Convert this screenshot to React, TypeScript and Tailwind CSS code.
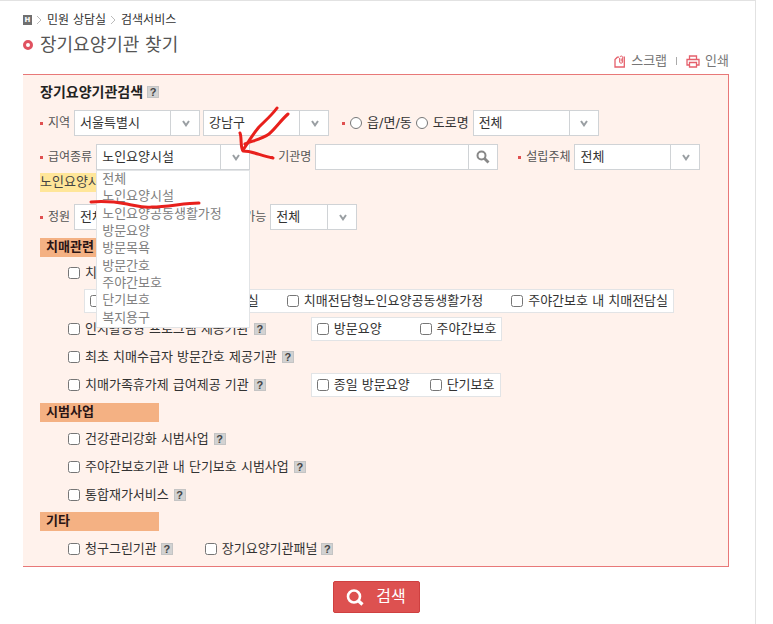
import { useState } from "react";
import type { ReactNode } from "react";

const CARE_TYPES = [
  "전체",
  "노인요양시설",
  "노인요양공동생활가정",
  "방문요양",
  "방문목욕",
  "방문간호",
  "주야간보호",
  "단기보호",
  "복지용구",
];

function Arrow() {
  return (
    <span className="pointer-events-none absolute inset-y-0 right-0 flex w-[30px] items-center justify-center border-l border-[#d0d3d6]">
      <svg width="8" height="7" viewBox="0 0 8 7" fill="none">
        <path d="M1 1L4 5.3L7 1" stroke="#9a9fa3" strokeWidth="2" />
      </svg>
    </span>
  );
}

type SelectProps = {
  label: string;
  options: string[];
  className: string;
};

function Select({ label, options, className }: SelectProps) {
  return (
    <span className={`relative inline-flex h-[26px] ${className}`}>
      <select
        aria-label={label}
        className="w-full appearance-none border border-[#d0d3d6] bg-white pl-[5px] text-[13px] leading-5 text-[#333]"
      >
        {options.map((option) => (
          <option key={option}>{option}</option>
        ))}
      </select>
      <Arrow />
    </span>
  );
}

function CareTypeSelect() {
  const [value, setValue] = useState("노인요양시설");
  const [open, setOpen] = useState(true);

  return (
    <span className="relative inline-flex h-[26px] w-[154px]">
      <button
        type="button"
        aria-label="급여종류"
        aria-haspopup="listbox"
        aria-expanded={open}
        onClick={() => setOpen(!open)}
        className="w-full border border-[#d0d3d6] bg-white pl-[5px] text-left text-[13px] leading-5 text-[#333]"
      >
        {value}
      </button>
      <Arrow />
      {open ? (
        <ul
          role="listbox"
          className="absolute left-0 top-full z-10 grid h-[158px] w-full grid-rows-9 border border-[#e2e4e6] bg-white text-[13px] leading-[15px] text-[#808080]"
        >
          {CARE_TYPES.map((type) => (
            <li
              key={type}
              role="option"
              aria-selected={type === value}
              onClick={() => {
                setValue(type);
                setOpen(false);
              }}
              className="cursor-pointer whitespace-nowrap pl-[5px] hover:bg-gray-100"
            >
              {type}
            </li>
          ))}
        </ul>
      ) : null}
    </span>
  );
}

function FieldLabel({ children }: { children: ReactNode }) {
  return (
    <span className="mr-1 flex items-center gap-[5px] whitespace-nowrap text-xs text-[#555]">
      <i className="size-[3px] bg-[#e05050]" />
      {children}
    </span>
  );
}

function Help() {
  return (
    <button
      type="button"
      aria-label="도움말"
      className="flex size-3 items-center justify-center border border-[#c4c4c4] bg-[#d2d2d2] font-['Liberation_Sans',sans-serif] text-[11px] font-bold leading-none text-[#444]"
    >
      ?
    </button>
  );
}

function Check({ children }: { children: ReactNode }) {
  return (
    <label className="flex items-center gap-[5px] whitespace-nowrap">
      <input type="checkbox" className="size-3" />
      {children}
    </label>
  );
}

function SectionTitle({ children }: { children: ReactNode }) {
  return (
    <h3 className="h-[19px] w-[119px] bg-[#f4b183] pl-[6px] text-[13px] font-bold leading-[18px] text-[#2a1515]">
      {children}
    </h3>
  );
}

function OptionBox({ children, className = "" }: { children: ReactNode; className?: string }) {
  return (
    <div className={`flex h-6 items-center border border-[#e2e4e6] bg-white px-[5px] ${className}`}>
      {children}
    </div>
  );
}

// Pen marks over the form
function PenMarks() {
  return (
    <svg
      className="pointer-events-none absolute left-0 top-0 z-20"
      width="300"
      height="220"
      viewBox="0 0 300 220"
      fill="none"
      stroke="#e8201c"
      strokeWidth="3"
      strokeLinecap="round"
      strokeLinejoin="round"
    >
      <path d="M277 108C272 115 265 121 259 127C253 134 249 141 243 150" />
      <path d="M288 114C281 120 276 128 269 134C262 139 252 141 245 144" />
      <path d="M240 133C242 138 240 146 243 151C253 151 261 156 273 158" />
      <path d="M91 202C104 201 116 202 127 204C138 206 142 208 152 207C167 207 185 203 199 203" />
    </svg>
  );
}

function Crumb() {
  return (
    <svg
      className="ml-1 mr-[5px]"
      width="6"
      height="10"
      viewBox="0 0 6 10"
      fill="none"
      stroke="#bbb"
      strokeWidth="1"
    >
      <path d="M1 1L5 5L1 9" />
    </svg>
  );
}

export default function App() {
  return (
    <div className="relative bg-white pr-[17px] font-['DejaVu_Sans','Noto_Sans_CJK_KR',sans-serif] text-[13px] leading-5 text-[#333]">
      <main className="min-h-screen border-r border-t border-[#e2e2e2] pl-[23px] pr-[26px] pt-[9px]">
        <nav className="flex h-5 items-center text-xs text-[#333]">
          <a
            href="#home"
            aria-label="홈"
            className="flex h-[10px] w-[9px] items-center justify-center bg-[#6f6f6f] text-[7px] font-bold leading-none text-white"
          >
            H
          </a>
          <Crumb />
          <a href="#counsel">민원 상담실</a>
          <Crumb />
          <a href="#search">검색서비스</a>
        </nav>

        <header className="flex h-11 items-start justify-between">
          <h1 className="flex h-[30px] items-center gap-[7px] text-lg text-[#555]">
            <i className="size-[10px] rounded-full border-[3px] border-[#e05260]" />
            장기요양기관 찾기
          </h1>
          <div className="flex items-center self-end pb-[3px] text-[#777]">
            <button type="button" className="flex items-center gap-[5px]">
              <svg width="12" height="13" viewBox="0 0 12 13" fill="none" stroke="#e5606c" strokeWidth="1.3">
                <path d="M5 2.2H3.3L1 4.5V12H10.3V2.2H9.5" />
                <path d="M5.6 3V7C5.6 8.6 8.6 8.6 8.6 7V2.2C8.6 0.6 6 0.6 6 2.2M7.2 3.5V6.5" strokeWidth="1" />
              </svg>
              스크랩
            </button>
            <span className="mx-[9px] h-2 w-px bg-[#aaa]" />
            <button type="button" className="flex items-center gap-[5px]">
              <svg width="14" height="13" viewBox="0 0 14 13" fill="none" stroke="#e5606c" strokeWidth="1.3">
                <path d="M3.5 4V1H10.5V4M3 10H1V4.5H13V10H11" />
                <path d="M3.5 7.5H10.5V12H3.5Z" />
              </svg>
              인쇄
            </button>
          </div>
        </header>

        <form onSubmit={(event) => event.preventDefault()}>
          <div className="border-y border-r border-[#e87878] bg-[#fff2ec] pb-[5px] pl-[17px] pt-[7px]">
            <h2 className="flex h-5 items-center gap-1 text-sm font-bold text-[#222]">
              장기요양기관검색 <Help />
            </h2>

            <div className="mt-2 flex h-[26px] items-center">
              <FieldLabel>지역</FieldLabel>
              <Select label="시/도" options={["서울특별시"]} className="w-[126px]" />
              <Select label="시/군/구" options={["강남구"]} className="ml-[3px] mr-[13px] w-[126px]" />
              <i className="mr-[5px] size-[3px] bg-[#e05050]" />
              <label className="mr-1 flex items-center gap-[5px]">
                <input type="radio" name="address" className="size-3" />
                읍/면/동
              </label>
              <label className="mr-1 flex items-center gap-[5px]">
                <input type="radio" name="address" className="size-3" />
                도로명
              </label>
              <Select label="상세 지역" options={["전체"]} className="w-[126px]" />
            </div>

            <div className="mt-2 flex h-[26px] items-center">
              <FieldLabel>급여종류</FieldLabel>
              <CareTypeSelect />
              <div className="mx-5 flex items-center">
                <FieldLabel>기관명</FieldLabel>
                <input
                  type="text"
                  aria-label="기관명"
                  className="h-[26px] w-[154px] border border-[#d0d3d6] bg-white px-[5px]"
                />
                <button
                  type="button"
                  aria-label="기관명 검색"
                  className="-ml-px flex h-[26px] w-[30px] items-center justify-center border border-[#d0d3d6] bg-white"
                >
                  <svg width="14" height="14" viewBox="0 0 14 14" fill="none" stroke="#888">
                    <circle cx="5.5" cy="5.5" r="4" strokeWidth="2" />
                    <path d="M8.5 8.5L12.5 12.5" strokeWidth="2.8" />
                  </svg>
                </button>
              </div>
              <FieldLabel>설립주체</FieldLabel>
              <Select label="설립주체" options={["전체"]} className="w-[126px]" />
            </div>

            <p className="mt-[3px] flex">
              <mark className="h-[19px] bg-[#ffe699] leading-[18px] text-[#444]">노인요양시설</mark>
            </p>

            <div className="mt-3 flex h-[26px] items-center">
              <FieldLabel>정원</FieldLabel>
              <Select label="정원" options={["전체"]} className="mr-[53px] w-[87px]" />
              <FieldLabel>입소가능</FieldLabel>
              <Select label="입소가능" options={["전체"]} className="w-[87px]" />
            </div>

            <div className="mt-2">
              <SectionTitle>치매관련</SectionTitle>
              <div className="mt-1 flex flex-col gap-1 pl-7">
                <div className="flex h-6 items-center">
                  <Check>치매전담형 장기요양기관</Check>
                </div>
                <div className="flex pl-4">
                  <OptionBox className="gap-7">
                    <Check>노인요양시설 내 치매전담실</Check>
                    <Check>치매전담형노인요양공동생활가정</Check>
                    <Check>주야간보호 내 치매전담실</Check>
                  </OptionBox>
                </div>
                <div className="flex h-6 items-center gap-[5px]">
                  <Check>인지활동형 프로그램 제공기관</Check>
                  <Help />
                  <OptionBox className="ml-10 gap-[38px]">
                    <Check>방문요양</Check>
                    <Check>주야간보호</Check>
                  </OptionBox>
                </div>
                <div className="flex h-6 items-center gap-[5px]">
                  <Check>최초 치매수급자 방문간호 제공기관</Check>
                  <Help />
                </div>
                <div className="flex h-6 items-center gap-[5px]">
                  <Check>치매가족휴가제 급여제공 기관</Check>
                  <Help />
                  <OptionBox className="ml-10 gap-5">
                    <Check>종일 방문요양</Check>
                    <Check>단기보호</Check>
                  </OptionBox>
                </div>
              </div>
            </div>

            <div className="mt-[6px]">
              <SectionTitle>시범사업</SectionTitle>
              <div className="mt-[5px] flex flex-col gap-1 pl-7">
                <div className="flex h-6 items-center gap-[5px]">
                  <Check>건강관리강화 시범사업</Check>
                  <Help />
                </div>
                <div className="flex h-6 items-center gap-[5px]">
                  <Check>주야간보호기관 내 단기보호 시범사업</Check>
                  <Help />
                </div>
                <div className="flex h-6 items-center gap-[5px]">
                  <Check>통합재가서비스</Check>
                  <Help />
                </div>
              </div>
            </div>

            <div className="mt-[5px]">
              <SectionTitle>기타</SectionTitle>
              <div className="mt-[6px] flex h-6 items-center gap-8 pl-7">
                <div className="flex items-center gap-1">
                  <Check>청구그린기관</Check>
                  <Help />
                </div>
                <div className="flex items-center gap-1">
                  <Check>장기요양기관패널</Check>
                  <Help />
                </div>
              </div>
            </div>
          </div>

          <div className="mt-[14px] flex justify-center">
            <button
              type="submit"
              className="flex h-8 w-[87px] items-center justify-center gap-3 rounded-[2px] border border-[#cf4040] bg-[#dd5150] text-base leading-5 text-white"
            >
              <svg width="18" height="17" viewBox="0 0 18 17" fill="none" stroke="#fff">
                <circle cx="8" cy="7.5" r="6" strokeWidth="2.6" />
                <path d="M12 11.5L16.5 15.5" strokeWidth="3.2" />
              </svg>
              검색
            </button>
          </div>
        </form>
      </main>
      <PenMarks />
    </div>
  );
}
